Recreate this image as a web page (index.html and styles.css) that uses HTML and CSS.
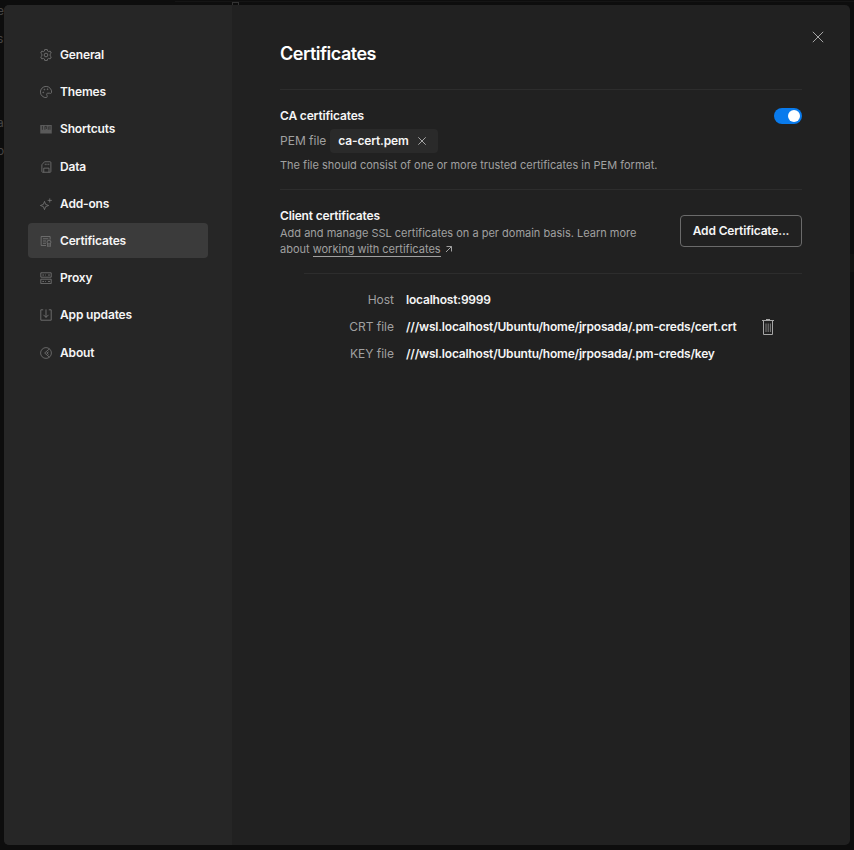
FILE: index.html
```html
<!DOCTYPE html>
<html lang="en">
<head>
<meta charset="utf-8">
<title>Settings</title>
<link rel="stylesheet" href="styles.css">
</head>
<body>
<div class="backdrop">
  <span class="peek peek-1">e</span>
  <span class="peek peek-2">s</span>
  <span class="peek peek-3">a</span>
  <span class="peek peek-4">o</span>
  <span class="peek-tab"></span>
  <span class="peek-box"></span>
  <span class="peek-row"></span>
</div>
<div class="modal">
  <nav class="sidebar">
    <a class="item"><svg viewBox="0.500 0.500 15 15"><path d="M6.500 1h3l.4 2 1.300.8 2-.7 1.400 2.500-1.500 1.400v2l1.500 1.400-1.400 2.500-2-.7-1.300.8-.4 2h-3l-.4-2-1.300-.8-2 .7-1.400-2.500L2.900 9V7L1.400 5.600l1.400-2.500 2 .7L6.100 3z"/><circle cx="8" cy="8" r="2.300"/></svg>General</a>
    <a class="item"><svg viewBox="0.500 0.500 15 15"><path d="M8.500 15A7 7 0 1 1 15 8.500c0 1.300-1.500 1.500-2.500 1H10c-1 0-1.500 1-1 2 .6 1.300.8 3.500-.5 3.500z"/><circle cx="4.500" cy="8.500" r=".5"/><circle cx="6" cy="5" r=".5"/><circle cx="10" cy="4.500" r=".5"/></svg>Themes</a>
    <a class="item"><svg viewBox="0 0 16 16"><path class="fill" d="M.3 2.500h15.400v11.500H.3z"/><path class="keys" d="M3.200 4v5M6.500 9V4.500h2V8M11 9V4.500M13.300 4v5"/></svg>Shortcuts</a>
    <a class="item"><svg viewBox="0 0 16 16"><path d="M6 1h7.500a1 1 0 0 1 1 1v12a1 1 0 0 1-1 1h-10a1 1 0 0 1-1-1V5zM5 15V9.500h7V15M7 3.500v2M9.300 3.500v2M11.700 3.500v2"/></svg>Data</a>
    <a class="item"><svg viewBox="0 0 16 16"><path d="M6 4.500 7.500 8.500 11.500 10 7.500 11.500 6 15.500 4.500 11.500.5 10l4-1.500zM13 .5v5.500M10.200 3.200h5.600"/></svg>Add-ons</a>
    <a class="item active"><svg viewBox="0 0 16 16"><path d="M8 14H1.500V2h12v4M4 5h7M4 8h4M4 11h4"/><circle cx="12" cy="9.500" r="2.600"/><path d="M10.200 11.500V15.500L12 14.300l1.800 1.200v-4"/></svg>Certificates</a>
    <a class="item"><svg viewBox="0.500 0.500 15 15"><path d="M1.500 1.500h13v5.500h-13zM1.500 9.500h13V15h-13zM3.500 4.300h2M7 4.300h1M10.500 4.300h2.500M3.500 12.300h2M7 12.300h1M10.500 12.300h2.500"/></svg>Proxy</a>
    <a class="item"><svg viewBox="0.500 0.500 15 15"><path d="M4.500 1.500h-3v13h13v-13h-3M8 1v10M4.800 7.800 8 11l3.200-3.200"/></svg>App updates</a>
    <a class="item"><svg viewBox="0 0 16 16"><circle cx="8" cy="8" r="7.200"/><path d="M12.500 2.500 6.200 8l6.300 5.500M11.500 6.500 9 8l2.500 2"/></svg>About</a>
  </nav>
  <main class="content">
    <svg class="close" viewBox="0 0 12 12"><path d="M.8.8l10.400 10.400M11.200.8.8 11.200"/></svg>
    <h1>Certificates</h1>
    <section class="ca">
      <div class="ca-head"><h2>CA certificates</h2><span class="toggle"></span></div>
      <div class="pem"><span class="muted">PEM file</span><span class="chip">ca-cert.pem<svg viewBox="0 0 10 10"><path d="M1.300 1.300l7.400 7.400M8.700 1.300 1.300 8.700"/></svg></span></div>
      <p class="help">The file should consist of one or more trusted certificates in PEM format.</p>
    </section>
    <section class="client">
      <div class="client-text">
        <h2>Client certificates</h2>
        <p class="help">Add and manage SSL certificates on a per domain basis. Learn more<br>about <a class="link">working with certificates</a><svg class="ext" viewBox="0 0 8 8"><path d="M1 7 6.500 1.500M1.500 1.500h5v5"/></svg></p>
      </div>
      <button class="add">Add Certificate...</button>
    </section>
    <section class="cert">
      <dl>
        <dt>Host</dt><dd>localhost:9999</dd>
        <dt>CRT file</dt><dd>///wsl.localhost/Ubuntu/home/jrposada/.pm-creds/cert.crt</dd>
        <dt>KEY file</dt><dd>///wsl.localhost/Ubuntu/home/jrposada/.pm-creds/key</dd>
      </dl>
      <svg class="trash" viewBox="0 0 12 16"><path d="M0 1.500h12M4 .5h4M1.500 2v13.500h9V2"/><path class="thin" d="M4 4.500v8.500M6.200 4.500v8.500M8.400 4.500v8.500"/></svg>
    </section>
  </main>
</div>
</body>
</html>
```

FILE: styles.css
```css
* { box-sizing: border-box; }
body {
  margin: 0;
  height: 850px;
  padding: 5px 4px;
  overflow: hidden;
  background: #0d0d0d;
  color: #f5f5f5;
  font: 580 12px/16px Inter, sans-serif;
  letter-spacing: -.16px;
}
h1, h2, p, dl, dd { margin: 0; }
svg { fill: none; stroke: currentColor; flex: none; }
.backdrop { position: absolute; inset: 0; overflow: hidden; color: #464646; font-weight: 400; }
.peek { position: absolute; left: -3px; }
.peek-1 { top: 3px; }
.peek-2 { top: 31px; }
.peek-3 { top: 115px; }
.peek-4 { top: 143px; }
.peek-tab { position: absolute; left: 175px; top: 1px; width: 679px; height: 10px; border-top: 1px solid #151515; }
.peek-box { position: absolute; left: 232px; top: 2px; width: 7px; height: 9px; border: 1px solid #333; }
.peek-row { position: absolute; right: 0; top: 254px; width: 4px; height: 18px; background: #121210; }
.modal {
  position: relative;
  display: flex;
  height: 840px;
  border-radius: 5px;
  overflow: hidden;
  background: #212121;
}
.sidebar {
  width: 228px;
  padding: 32.400px 24px;
  background: #262626;
  display: flex;
  flex-direction: column;
  gap: 2.230px;
}
.item {
  display: flex;
  align-items: center;
  gap: 8px;
  height: 35px;
  padding-left: 12px;
  border-radius: 4px;
}
.item svg { width: 12px; height: 12px; color: #7c7c7c; }
.item .fill { fill: #5a5a5a; stroke: none; }
.item .keys { stroke: #262626; }
.item.active { background: #3b3b3b; }
.content { flex: 1; padding: 37px 48px 0; position: relative; }
.close { position: absolute; left: 580px; top: 26px; width: 12px; height: 12px; color: #a6a6a6; }
h1 { font-size: 18px; line-height: 24px; font-weight: 600; letter-spacing: -.5px; color: #fff; }
h2 { font-size: 12px; line-height: 16px; font-weight: 580; }
.ca { margin-top: 23px; height: 100px; padding-top: 18px; border-top: 1px solid #2d2d2d; }
.ca-head { display: flex; justify-content: space-between; }
.toggle { width: 28px; height: 16px; border-radius: 8px; background: #097bed; padding: 2px; display: flex; justify-content: flex-end; }
.toggle::after { content: ""; width: 12px; height: 12px; border-radius: 50%; background: #fff; }
.pem { display: flex; align-items: center; gap: 4px; margin-top: 5px; height: 24px; }
.muted, dt { color: #a0a0a0; font-weight: 400; letter-spacing: 0; }
.chip { width: 108px; height: 24px; padding: 0 11px 0 8px; display: flex; align-items: center; justify-content: space-between; background: #2a2a2a; border-radius: 4px; }
.chip svg { width: 10px; height: 10px; color: #a6a6a6; }
.help { font-size: 11px; line-height: 16px; font-weight: 400; color: #a0a0a0; letter-spacing: 0; }
.ca .help { margin-top: 4px; }
.client { display: flex; justify-content: space-between; height: 84px; padding-top: 18px; border-top: 1px solid #2d2d2d; }
.client .help { margin-top: 1px; }
.link { border-bottom: 1px solid #a0a0a0; }
.ext { width: 8px; height: 8px; margin-left: 4px; }
.add { width: 122px; height: 32px; margin-top: 7px; padding: 0; border: 1px solid #6b6b6b; border-radius: 4px; background: none; color: inherit; font: inherit; letter-spacing: inherit; }
.cert { margin-left: 24px; display: flex; align-items: center; border-top: 1px solid #2d2d2d; height: 107px; }
dl { width: 458px; display: grid; grid-template-columns: 90px 1fr; column-gap: 12px; row-gap: 11px; }
dt { text-align: right; }
dd { white-space: nowrap; letter-spacing: -.2px; }
.trash { width: 12px; height: 16px; color: #a6a6a6; }
.trash .thin { stroke-width: .7; }
```
